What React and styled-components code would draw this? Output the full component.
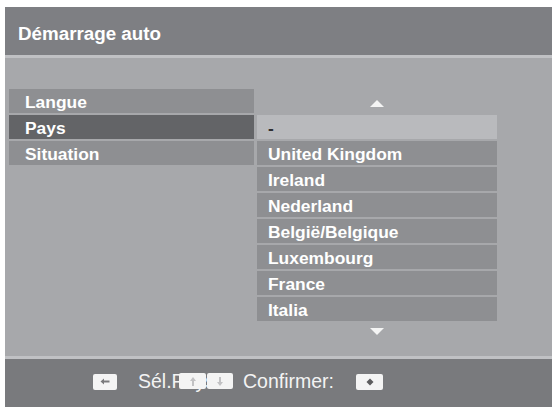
import React from "react";
import styled, { createGlobalStyle } from "styled-components";

const GlobalStyle = createGlobalStyle`
  html, body {
    margin: 0;
    background: #ffffff;
  }
  body {
    font-family: "Liberation Sans", Arial, sans-serif;
  }
`;

const Screen = styled.div`
  margin: 7px 0 0 5px;
  width: 547px;
  height: 400px;
  display: flex;
  flex-direction: column;
  background: #a7a8ab;
  overflow: hidden;
`;

const Header = styled.div`
  height: 51px;
  box-sizing: border-box;
  padding: 5px 0 0 13px;
  display: flex;
  align-items: center;
  background: #7e7f83;
  border-bottom: 3px solid #c0c1c4;
  color: #ffffff;
  font-weight: bold;
  font-size: 18.8px;
`;

const Body = styled.div`
  flex: 1;
  display: flex;
  gap: 3px;
  padding: 31px 0 0 4px;
`;

const Menu = styled.div`
  width: 245px;
  display: flex;
  flex-direction: column;
  gap: 2px;
`;

const MenuItem = styled.div`
  height: 24px;
  box-sizing: border-box;
  padding: 2px 0 0 16px;
  display: flex;
  align-items: center;
  background: ${(p) => (p.$active ? "#636467" : "#8e8f92")};
  color: #ffffff;
  font-weight: bold;
  font-size: 17.4px;
`;

const ListColumn = styled.div`
  width: 240px;
  display: flex;
  flex-direction: column;
  gap: 2px;
`;

const ArrowSlot = styled.div`
  height: ${(p) => p.$h}px;
  display: flex;
  justify-content: center;
  align-items: ${(p) => (p.$down ? "flex-end" : "center")};
`;

const Triangle = styled.div`
  width: 0;
  height: 0;
  border-left: 7px solid transparent;
  border-right: 7px solid transparent;
  ${(p) =>
    p.$down
      ? "border-top: 7px solid #f4f4f4;"
      : "border-bottom: 7px solid #f4f4f4; margin-top: 4px;"}
`;

const ListItem = styled.div`
  height: 24px;
  box-sizing: border-box;
  padding: 2px 0 0 11px;
  display: flex;
  align-items: center;
  background: ${(p) => (p.$selected ? "#b9babd" : "#8e8f92")};
  color: ${(p) => (p.$selected ? "#2e2e30" : "#ffffff")};
  font-weight: bold;
  font-size: 17.4px;
`;

const Footer = styled.div`
  height: 51px;
  box-sizing: border-box;
  border-top: 3px solid #c0c1c4;
  padding: 0 0 3px 88px;
  display: flex;
  align-items: center;
  background: #797a7d;
  color: #f3f3f3;
  font-size: 19.5px;
`;

const Key = styled.span`
  width: ${(p) => p.$w || 24}px;
  height: 16px;
  border-radius: 2px;
  background: #f4f4f4;
  display: inline-flex;
  align-items: center;
  justify-content: center;
  flex: none;
`;

const OverKey = styled(Key)`
  position: absolute;
  top: 3px;
  left: ${(p) => p.$left}px;
`;

const HintText = styled.span`
  position: relative;
  display: inline-block;
  width: 100px;
  margin-left: 21px;
  white-space: nowrap;
`;

const Confirm = styled.span`
  margin: 0 22px 0 5px;
`;

const countries = [
  "-",
  "United Kingdom",
  "Ireland",
  "Nederland",
  "België/Belgique",
  "Luxembourg",
  "France",
  "Italia",
];

function LeftGlyph() {
  return (
    <svg width="10" height="7" viewBox="0 0 10 7">
      <path d="M0.5 3.5 L4 0.5 L4 2.6 L9.5 2.6 L9.5 4.4 L4 4.4 L4 6.5 Z" fill="#7a7a7c" />
    </svg>
  );
}

function UpDownGlyph({ down }) {
  return (
    <svg width="6" height="9" viewBox="0 0 6 9">
      <path
        d={down ? "M3 9 L0 5 L2 5 L2 0 L4 0 L4 5 L6 5 Z" : "M3 0 L0 4 L2 4 L2 9 L4 9 L4 4 L6 4 Z"}
        fill="#c2c2c4"
      />
    </svg>
  );
}

function OkGlyph() {
  return (
    <svg width="8" height="8" viewBox="0 0 8 8">
      <path d="M4 0.5 L7.5 4 L4 7.5 L0.5 4 Z" fill="#5c5c5e" />
    </svg>
  );
}

export default function App() {
  return (
    <>
      <GlobalStyle />
      <Screen>
        <Header>Démarrage auto</Header>
        <Body>
          <Menu>
            <MenuItem>Langue</MenuItem>
            <MenuItem $active>Pays</MenuItem>
            <MenuItem>Situation</MenuItem>
          </Menu>
          <ListColumn>
            <ArrowSlot $h={24}>
              <Triangle />
            </ArrowSlot>
            {countries.map((c, i) => (
              <ListItem key={c} $selected={i === 0}>
                {c}
              </ListItem>
            ))}
            <ArrowSlot $h={12} $down>
              <Triangle $down />
            </ArrowSlot>
          </ListColumn>
        </Body>
        <Footer>
          <Key>
            <LeftGlyph />
          </Key>
          <HintText>
            Sél.Pays
            <OverKey $left={41} $w={27}>
              <UpDownGlyph />
            </OverKey>
            <OverKey $left={69} $w={26}>
              <UpDownGlyph down />
            </OverKey>
          </HintText>
          <Confirm>Confirmer:</Confirm>
          <Key $w={27}>
            <OkGlyph />
          </Key>
        </Footer>
      </Screen>
    </>
  );
}
